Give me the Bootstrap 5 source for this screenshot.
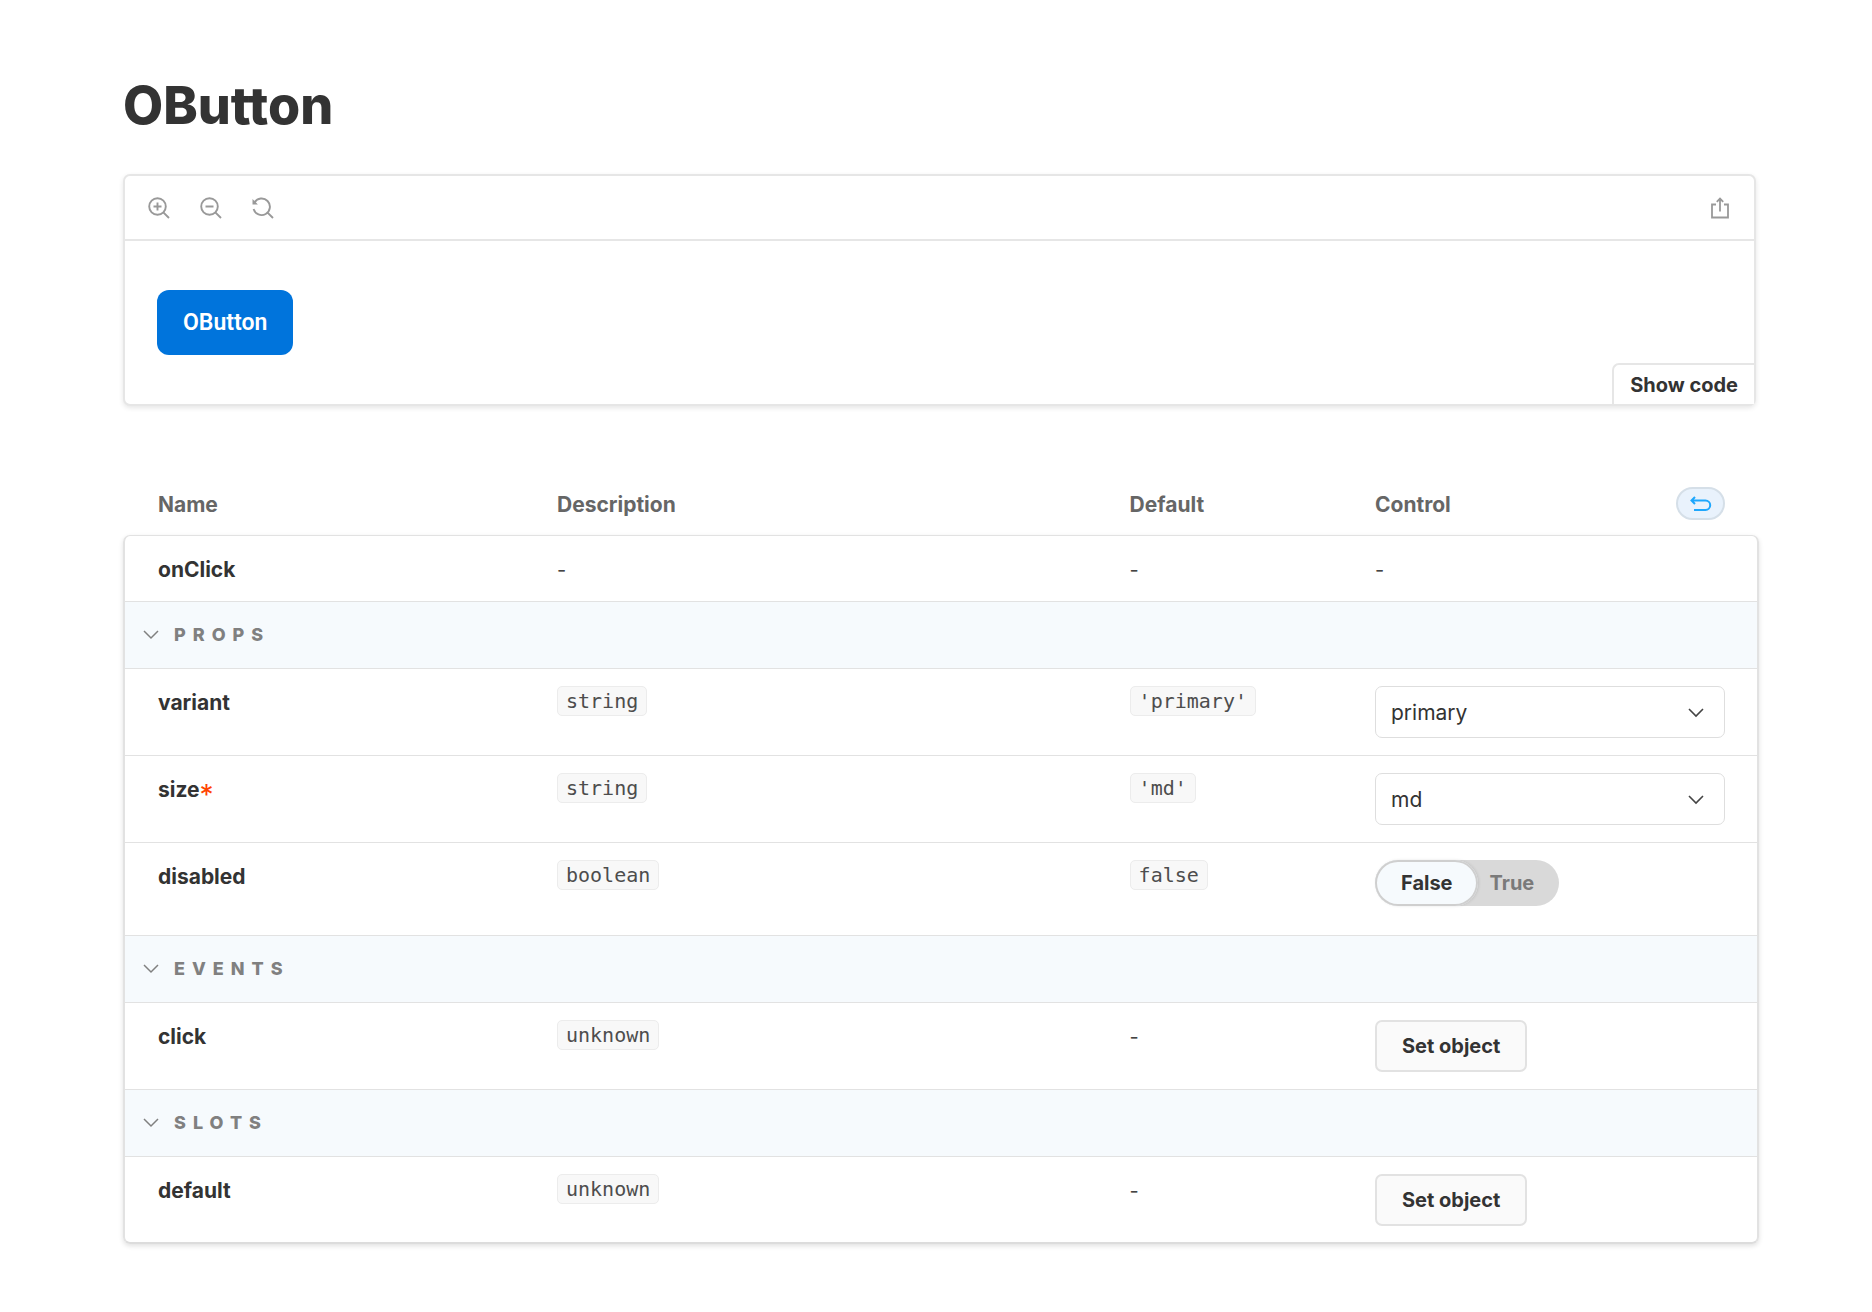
<!DOCTYPE html>
<html lang="en">
<head>
<meta charset="utf-8">
<meta name="viewport" content="width=device-width, initial-scale=1">
<title>OButton</title>
<link href="https://cdn.jsdelivr.net/npm/bootstrap@5.3.0/dist/css/bootstrap.min.css" rel="stylesheet">
<style>
body{font-family:Inter,"Liberation Sans",sans-serif;color:#333;font-size:20px;line-height:30px;background:#fff}
.docs{padding:74px 113px 64px 123px}
.docs-title{font-size:52px;line-height:64px;font-weight:800;color:#333;margin-bottom:36px;font-variant-ligatures:none}
.preview{border:2px solid #e6e6e6;border-radius:7px;box-shadow:0 2px 5px rgba(0,0,0,.1);margin-right:3px;margin-bottom:80px}
.tools{height:65px;border-bottom:2px solid #e6e6e6;padding:0 23px}
.tool-btn{border:0;background:none;padding:0;color:#999;line-height:0}
.tool-btn svg,.reset-btn svg,.chev{display:block;fill:none;stroke:currentColor}
.stage{padding:49px 32px 0}
.o-btn{font-family:Roboto,sans-serif;font-size:23px;line-height:33px;font-weight:600;color:#fff;background:#0074dc;border:0;border-radius:12px;padding:16px 26px}
.o-btn:hover{background:#0067c4;color:#fff}
.code-btn{border:2px solid #e6e6e6;border-width:2px 0 0 2px;border-radius:7px 0 0 0;background:#fff;font-weight:700;color:#333;padding:5px 16px 4px 16px;margin-top:8px}
.args{table-layout:fixed;border-collapse:separate;border-spacing:0}
.args th,.args td{vertical-align:top;padding:17px 25px 0;text-align:left}
.args th:first-child,.args td:first-child{padding-left:35px}
.args th:last-child,.args td:last-child{padding-right:34px}
.args thead th{font-size:21px;font-weight:700;color:#666;height:49px;padding-top:4px}
.args tbody{border-radius:7px;box-shadow:0 2px 5px rgba(0,0,0,.12)}
.args tbody tr>*{height:87px;border-bottom:1px solid #e2e2e2;font-weight:400;color:#444}
.args tbody th,.args tbody td.none{padding-top:19px}
.args tbody th{font-size:21px;font-weight:700;color:#333}
.args tbody tr.short>*{height:67px}
.args tbody tr.tall>*{height:93px}
.args tbody tr>*:first-child{border-left:2px solid #e2e2e2;padding-left:33px}
.args tbody tr>*:last-child{border-right:2px solid #e2e2e2;padding-right:32px}
.args tbody tr:first-child>*{border-top:1px solid #e2e2e2}
.args tbody tr:first-child>*:first-child{border-top-left-radius:7px}
.args tbody tr:first-child>*:last-child{border-top-right-radius:7px}
.args tbody tr:last-child>*{border-bottom:2px solid #dcdcdc}
.args tbody tr:last-child>*:first-child{border-bottom-left-radius:7px}
.args tbody tr:last-child>*:last-child{border-bottom-right-radius:7px}
.args tbody tr.group>td:first-child{background:#f6fafd;padding:0 18px;vertical-align:middle}
.group-btn{border:0;background:none;padding:0;font-size:18px;line-height:28px;font-weight:800;letter-spacing:7px;color:#808080;gap:15px}
.chip{display:block;width:max-content;font:20px/28px "DejaVu Sans Mono",monospace;color:#4d4d4d;background:#f8f8f8;border:1px solid #ececec;border-radius:5px;padding:0 8px}
.required{color:#ff4400;font-weight:400;font-size:28px;line-height:0;vertical-align:-8px}
.pick{position:relative}
.pick .form-select{font-size:21px;line-height:30px;color:#333;border:1px solid #dedede;border-radius:7px;height:52px;padding:2px 48px 0 15px;background-image:none}
.pick .chev{position:absolute;right:21px;top:22px;pointer-events:none}
.reset-btn{width:49px;height:33px;border:2px solid #d5dfe8;border-radius:17px;background:#e9f2fc;color:#1ea7fd;padding:0;margin-top:-3px}
.object-btn{font-size:20px;line-height:30px;font-weight:700;color:#333;background:#fafafa;border:2px solid #e2e2e2;border-radius:7px;padding:9px 25px}
.flip{background:#d9d9d9;border-radius:23px;width:max-content;height:46px}
.flip label{height:46px;line-height:46px;font-weight:700;color:#7a7a7a;border-radius:23px;padding:0 25px 0 12px;cursor:pointer}
.flip label:first-of-type{padding:0 25px 0 26px}
.flip .btn-check:checked+label{background:#f6fafd;color:#333;box-shadow:inset 0 0 0 2px #cfcfcf,1px 0 3px rgba(0,0,0,.1)}
</style>
</head>
<body>
<main class="docs">
  <h1 class="docs-title">OButton</h1>

  <section class="preview bg-white">
    <div class="tools d-flex align-items-center justify-content-between">
      <div class="d-flex" style="gap:30px">
        <button class="tool-btn" type="button" aria-label="Zoom in"><svg width="22" height="22" viewBox="0 0 22 22" stroke-width="1.9"><circle cx="9.500" cy="9.500" r="8.300"/><path d="M15.300 15.300 21 21M9.500 5.500v8M5.500 9.500h8"/></svg></button>
        <button class="tool-btn" type="button" aria-label="Zoom out"><svg width="22" height="22" viewBox="0 0 22 22" stroke-width="1.9"><circle cx="9.500" cy="9.500" r="8.300"/><path d="M15.300 15.300 21 21M5.500 9.500h8"/></svg></button>
        <button class="tool-btn" type="button" aria-label="Reset zoom"><svg width="22" height="22" viewBox="0 0 22 22" stroke-width="1.9"><path d="M2.500 5.500A8.300 8.300 0 1 1 1.600 12M15.300 15.300 21 21"/><path d="M.5 2v5.400h5.400z" fill="currentColor" stroke="none"/></svg></button>
      </div>
      <button class="tool-btn" type="button" aria-label="Open canvas in new tab"><svg width="22" height="22" viewBox="0 0 22 22" stroke-width="1.8"><path d="M7 7.500H3v13h16v-13h-4M11 14.500V2M7.800 4.800 11 1.500 14.200 4.800"/></svg></button>
    </div>
    <div class="stage"><button class="o-btn btn" type="button">OButton</button></div>
    <div class="d-flex justify-content-end"><button class="code-btn" type="button">Show code</button></div>
  </section>

  <table class="args w-100">
    <colgroup><col style="width:25%"><col style="width:35%"><col style="width:15%"><col style="width:25%"></colgroup>
    <thead>
      <tr>
        <th scope="col">Name</th>
        <th scope="col">Description</th>
        <th scope="col">Default</th>
        <th scope="col"><div class="d-flex justify-content-between">Control
          <button class="reset-btn d-flex align-items-center justify-content-center" type="button" aria-label="Reset controls"><svg width="22" height="16" viewBox="0 0 22 16" stroke-width="2"><path d="M5 1 1.500 4.500 5 8M2 4.500h13.500a4.700 4.700 0 0 1 0 9.400H4"/></svg></button></div></th>
      </tr>
    </thead>
    <tbody>
      <tr class="short"><th scope="row">onClick</th><td class="none">-</td><td class="none">-</td><td class="none">-</td></tr>
      <tr class="short group"><td colspan="4"><button class="group-btn d-flex align-items-center" type="button"><svg class="chev" width="16" height="10" viewBox="0 0 16 10" stroke-width="1.500"><path d="M1 1l7 7 7-7"/></svg>PROPS</button></td></tr>
      <tr><th scope="row"><label for="variant">variant</label></th><td><code class="chip">string</code></td><td><code class="chip">'primary'</code></td>
        <td><div class="pick"><select class="form-select" id="variant"><option>primary</option></select><svg class="chev" width="16" height="10" viewBox="0 0 16 10" stroke-width="1.600"><path d="M1 1l7 7 7-7"/></svg></div></td></tr>
      <tr><th scope="row"><label for="size">size<span class="required">*</span></label></th><td><code class="chip">string</code></td><td><code class="chip">'md'</code></td>
        <td><div class="pick"><select class="form-select" id="size"><option>md</option></select><svg class="chev" width="16" height="10" viewBox="0 0 16 10" stroke-width="1.600"><path d="M1 1l7 7 7-7"/></svg></div></td></tr>
      <tr class="tall"><th scope="row">disabled</th><td><code class="chip">boolean</code></td><td><code class="chip">false</code></td>
        <td><div class="flip d-flex" role="group" aria-label="disabled"><input class="btn-check" type="radio" name="disabled" id="off" checked><label for="off">False</label><input class="btn-check" type="radio" name="disabled" id="on"><label for="on">True</label></div></td></tr>
      <tr class="short group"><td colspan="4"><button class="group-btn d-flex align-items-center" type="button"><svg class="chev" width="16" height="10" viewBox="0 0 16 10" stroke-width="1.500"><path d="M1 1l7 7 7-7"/></svg>EVENTS</button></td></tr>
      <tr><th scope="row">click</th><td><code class="chip">unknown</code></td><td class="none">-</td><td><button class="object-btn" type="button">Set object</button></td></tr>
      <tr class="short group"><td colspan="4"><button class="group-btn d-flex align-items-center" type="button"><svg class="chev" width="16" height="10" viewBox="0 0 16 10" stroke-width="1.500"><path d="M1 1l7 7 7-7"/></svg>SLOTS</button></td></tr>
      <tr><th scope="row">default</th><td><code class="chip">unknown</code></td><td class="none">-</td><td><button class="object-btn" type="button">Set object</button></td></tr>
    </tbody>
  </table>
</main>
<script src="https://cdn.jsdelivr.net/npm/bootstrap@5.3.0/dist/js/bootstrap.bundle.min.js"></script>
</body>
</html>
